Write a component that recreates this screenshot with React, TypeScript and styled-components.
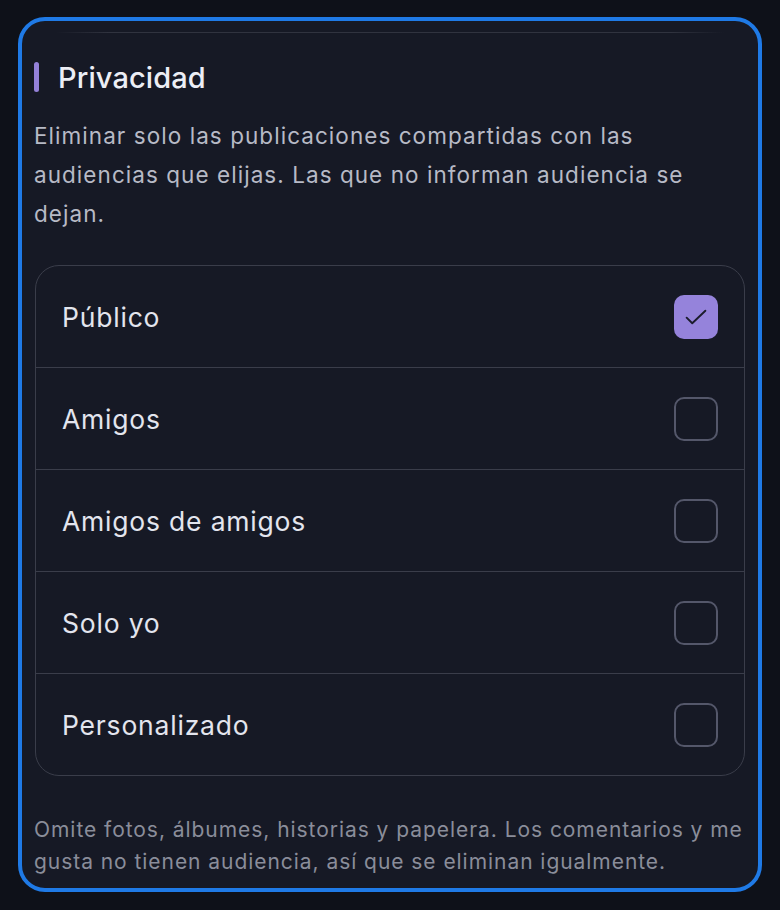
import React, { useState } from "react";
import styled, { createGlobalStyle } from "styled-components";

const Global = createGlobalStyle`
  html, body { margin: 0; padding: 0; background: #0e1119; }
  body { font-family: Inter, "Noto Sans", "Liberation Sans", sans-serif; -webkit-font-smoothing: antialiased; }
  * { box-sizing: border-box; }
`;

const Page = styled.div`
  padding: 17px 18px 18px 18px;
  min-height: 910px;
  background: #0e1119;
`;

const Panel = styled.section`
  width: 744px;
  height: 875px;
  border: 4px solid #1f7ae6;
  border-radius: 27px;
  background: #161925;
  padding: 0 10px 0 12px;
  display: flex;
  flex-direction: column;
  overflow: hidden;
`;

const Divider = styled.div`
  height: 1px;
  margin: 11px 24px 0 22px;
  background: linear-gradient(90deg, rgba(60,63,76,0) 0%, #30333f 8%, #30333f 92%, rgba(60,63,76,0) 100%);
`;

const HeadingRow = styled.div`
  display: flex;
  align-items: center;
  gap: 19px;
  margin-top: 29px;
  height: 30px;
`;

const Accent = styled.span`
  width: 5px;
  height: 30px;
  border-radius: 3px;
  background: #9481d9;
`;

const Heading = styled.h2`
  margin: 0;
  font-size: 29px;
  font-weight: 500;
  color: #eceef5;
  letter-spacing: 0.1px;
`;

const Description = styled.p`
  margin: 24px 4px 0 0;
  font-size: 22.5px;
  line-height: 39px;
  letter-spacing: 1.05px;
  color: #b7bac6;
`;

const List = styled.div`
  margin: 32px 3px 0 1px;
  border: 1px solid #3a3d4a;
  border-radius: 24px;
  display: flex;
  flex-direction: column;
  overflow: hidden;
`;

const Row = styled.label`
  display: flex;
  align-items: center;
  justify-content: space-between;
  height: 101px;
  padding: 0 26px 0 26px;
  cursor: pointer;
  & + & { border-top: 1px solid #3a3d4a; height: 102px; }
`;

const RowText = styled.span`
  font-size: 26.5px;
  color: #e3e5ee;
  letter-spacing: 0.8px;
`;

const Box = styled.span<{ $checked: boolean }>`
  width: 44px;
  height: 44px;
  border-radius: 10px;
  display: flex;
  align-items: center;
  justify-content: center;
  border: ${(p) => (p.$checked ? "none" : "2px solid #54576a")};
  background: ${(p) => (p.$checked ? "#9583db" : "transparent")};
`;

const Footer = styled.p`
  margin: 38px 0 0 0;
  font-size: 21px;
  line-height: 32px;
  letter-spacing: 0.95px;
  color: #8a8d9a;
`;

const items = ["Público", "Amigos", "Amigos de amigos", "Solo yo", "Personalizado"];

export default function App() {
  const [checked, setChecked] = useState<Record<string, boolean>>({ "Público": true });
  return (
    <Page>
      <Global />
      <Panel>
        <Divider />
        <HeadingRow>
          <Accent />
          <Heading>Privacidad</Heading>
        </HeadingRow>
        <Description>
          Eliminar solo las publicaciones compartidas con las audiencias que elijas. Las que no informan audiencia se dejan.
        </Description>
        <List>
          {items.map((it) => (
            <Row key={it} onClick={() => setChecked((c) => ({ ...c, [it]: !c[it] }))}>
              <RowText>{it}</RowText>
              <Box $checked={!!checked[it]}>
                {checked[it] && (
                  <svg width="30" height="30" viewBox="0 0 24 24" fill="none" stroke="#1b1c2c" strokeWidth="1.5" strokeLinecap="round" strokeLinejoin="round">
                    <path d="M4.5 12.5l4.5 4.5L19.5 7" />
                  </svg>
                )}
              </Box>
            </Row>
          ))}
        </List>
        <Footer>
          Omite fotos, álbumes, historias y papelera. Los comentarios y me gusta no tienen audiencia, así que se eliminan igualmente.
        </Footer>
      </Panel>
    </Page>
  );
}
